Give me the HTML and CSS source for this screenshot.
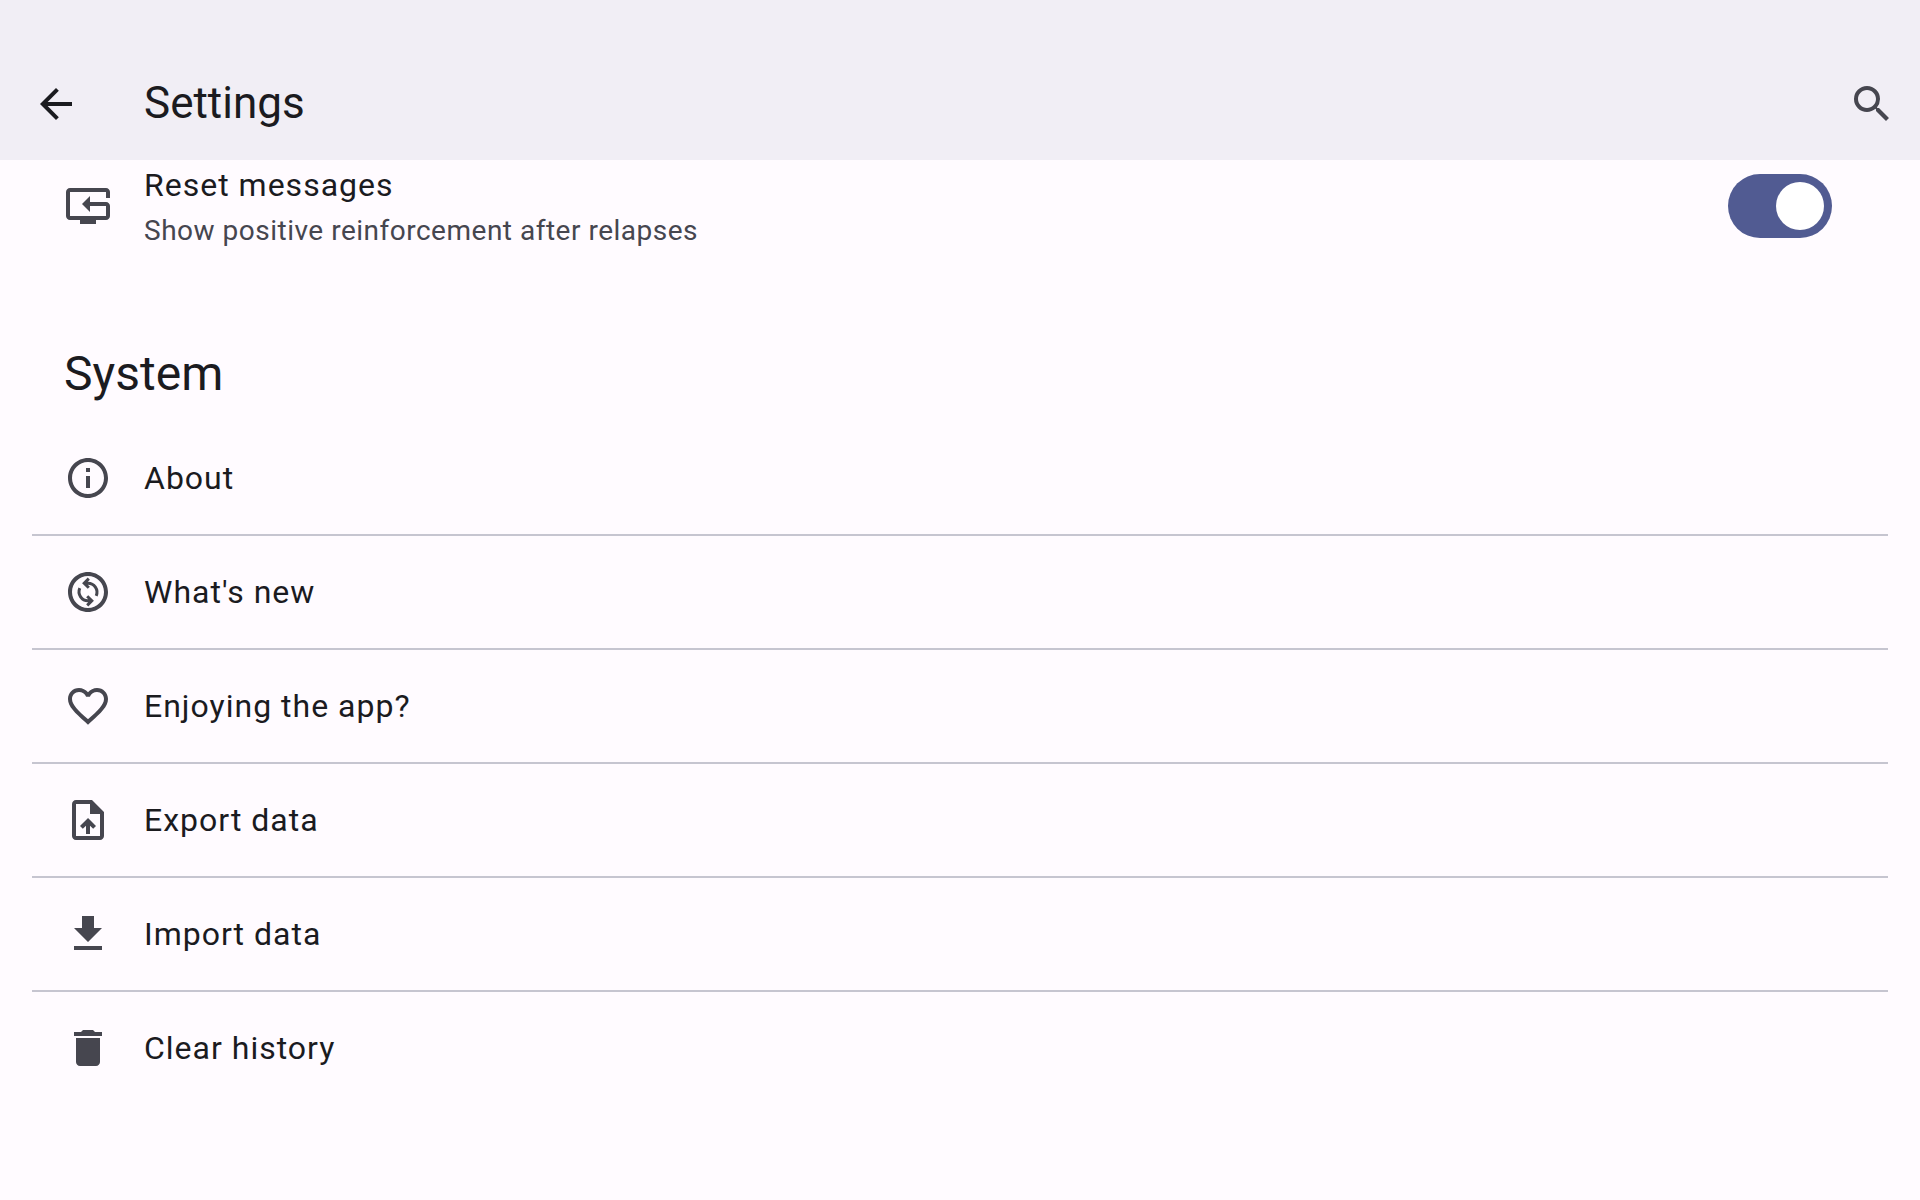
FILE: index.html
```html
<!DOCTYPE html>
<html lang="en">
<head>
<meta charset="utf-8">
<meta name="viewport" content="width=device-width, initial-scale=1">
<title>Settings</title>
<link rel="stylesheet" href="styles.css">
</head>
<body>
<header class="app-bar">
  <button class="icon-button icon-button-back" type="button" aria-label="Back">
    <svg class="icon" viewBox="0 0 24 24"><path d="M20 11H7.83l5.59-5.59L12 4l-8 8 8 8 1.41-1.41L7.83 13H20z"/></svg>
  </button>
  <h1 class="app-title">Settings</h1>
  <button class="icon-button icon-button-search" type="button" aria-label="Search">
    <svg class="icon" viewBox="0 0 24 24"><path d="M15.5 14h-.79l-.28-.27A6.47 6.47 0 0 0 16 9.5 6.5 6.5 0 1 0 9.5 16c1.61 0 3.09-.59 4.23-1.57l.27.28v.79l5 4.99L20.49 19l-4.99-5zm-6 0C7.01 14 5 11.99 5 9.5S7.01 5 9.5 5 14 7.01 14 9.5 11.99 14 9.5 14z"/></svg>
  </button>
</header>
<main class="settings">
  <label class="setting" for="reset-messages">
    <svg class="icon" viewBox="0 0 24 24"><path d="M23 8V5c0-1.1-.9-2-2-2H3c-1.1 0-2 .9-2 2v12c0 1.1.9 2 2 2h5v2h8v-2h5c1.1 0 2-.9 2-2v-5c0-1.1-.9-2-2-2h-8V7l-4 4 4 4v-3h8v5H3V5h18v3z"/></svg>
    <span class="setting-text">
      <span class="setting-title">Reset messages</span>
      <span class="setting-summary">Show positive reinforcement after relapses</span>
    </span>
    <input class="switch" type="checkbox" role="switch" id="reset-messages" checked>
  </label>
  <h2 class="section-title">System</h2>
  <ul class="list">
    <li class="list-item"><button class="row" type="button">
      <svg class="icon" viewBox="0 0 24 24"><path d="M11 7h2v2h-2zm0 4h2v6h-2zm1-9C6.48 2 2 6.48 2 12s4.48 10 10 10 10-4.48 10-10S17.52 2 12 2zm0 18c-4.41 0-8-3.59-8-8s3.59-8 8-8 8 3.59 8 8-3.59 8-8 8z"/></svg>
      About</button></li>
    <li class="list-item"><button class="row" type="button">
      <svg class="icon" viewBox="0 0 24 24"><path d="M12 2C6.48 2 2 6.48 2 12s4.48 10 10 10 10-4.48 10-10S17.52 2 12 2zm0 18c-4.41 0-8-3.59-8-8s3.59-8 8-8 8 3.59 8 8-3.59 8-8 8z"/><path class="icon-line" d="M12.4 5.3 10.1 7.6l2.3 2.3M10.1 7.6h1.7a4.5 4.5 0 0 1 4.3 6.3M11.6 18.7l2.3-2.3-2.3-2.3M13.9 16.4h-1.7a4.5 4.5 0 0 1-4.3-6.3"/></svg>
      What's new</button></li>
    <li class="list-item"><button class="row" type="button">
      <svg class="icon" viewBox="0 0 24 24"><path d="M16.5 3c-1.74 0-3.41.81-4.5 2.09C10.91 3.81 9.24 3 7.5 3 4.42 3 2 5.42 2 8.5c0 3.78 3.4 6.86 8.55 11.54L12 21.35l1.45-1.32C18.6 15.36 22 12.28 22 8.5 22 5.42 19.58 3 16.5 3zm-4.4 15.55l-.1.1-.1-.1C7.14 14.24 4 11.39 4 8.5 4 6.5 5.5 5 7.5 5c1.54 0 3.04.99 3.57 2.36h1.87C13.46 5.99 14.96 5 16.5 5c2 0 3.5 1.5 3.5 3.5 0 2.89-3.14 5.74-7.9 10.05z"/></svg>
      Enjoying the app?</button></li>
    <li class="list-item"><button class="row" type="button">
      <svg class="icon" viewBox="0 0 24 24"><path d="M14 2H6c-1.1 0-1.99.9-1.99 2L4 20c0 1.1.89 2 1.99 2H18c1.1 0 2-.9 2-2V8l-6-6zm4 18H6V4h7v5h5v11zM8 15.01l1.41 1.41L11 14.84V19h2v-4.16l1.59 1.59L16 15.01 12.01 11z"/></svg>
      Export data</button></li>
    <li class="list-item"><button class="row" type="button">
      <svg class="icon" viewBox="0 0 24 24"><path d="M19 9h-4V3H9v6H5l7 7zM5 18v2h14v-2z"/></svg>
      Import data</button></li>
    <li class="list-item"><button class="row" type="button">
      <svg class="icon" viewBox="0 0 24 24"><path d="M6 19c0 1.1.9 2 2 2h8c1.1 0 2-.9 2-2V7H6zM19 4h-3.5l-1-1h-5l-1 1H5v2h14z"/></svg>
      Clear history</button></li>
  </ul>
</main>
</body>
</html>
```
FILE: styles.css
```css
* {
  box-sizing: border-box;
}

body {
  margin: 0;
  background: #fffbff;
  color: #1b1b1f;
  font-family: Roboto, "Liberation Sans", sans-serif;
}

button {
  padding: 0;
  border: 0;
  background: none;
  font: inherit;
  color: inherit;
  cursor: pointer;
}

.icon {
  display: block;
  flex: none;
  width: 48px;
  height: 48px;
  fill: #46464f;
}

.icon-line {
  fill: none;
  stroke: #46464f;
  stroke-width: 1.5;
}

.app-bar {
  display: flex;
  align-items: center;
  gap: 64px;
  padding: 48px 24px 0 32px;
  height: 160px;
  background: #f1eef5;
}

.icon-button-back .icon {
  fill: #1b1b1f;
}

.app-title {
  flex: 1;
  margin: 0;
  padding-bottom: 2px;
  font-size: 44px;
  line-height: 56px;
  font-weight: 400;
}

.settings {
  padding: 0 32px 96px;
}

.setting {
  display: flex;
  align-items: center;
  gap: 32px;
  min-height: 92px;
  padding: 0 56px 0 32px;
}

.setting-text {
  display: flex;
  flex: 1;
  flex-direction: column;
  gap: 2px;
}

.setting-title,
.row {
  font-size: 32px;
  line-height: 48px;
  letter-spacing: 1px;
}

.setting-summary {
  color: #46464f;
  font-size: 28px;
  line-height: 40px;
  letter-spacing: 0.018em;
}

.switch {
  appearance: none;
  display: flex;
  align-items: center;
  justify-content: flex-end;
  flex: none;
  width: 104px;
  height: 64px;
  margin: 0;
  padding: 8px;
  border-radius: 32px;
  background: #c6c5d0;
  cursor: pointer;
}

.switch::before {
  content: "";
  width: 48px;
  height: 48px;
  border-radius: 50%;
  background: #fff;
}

.switch:not(:checked) {
  justify-content: flex-start;
}

.switch:checked {
  background: #515b92;
}

.section-title {
  margin: 0;
  padding: 90px 32px 16px;
  font-size: 48px;
  line-height: 64px;
  font-weight: 400;
}

.list {
  margin: 0;
  padding: 0;
  list-style: none;
}

.list-item + .list-item {
  border-top: 2px solid #c6c5d0;
}

.row {
  display: flex;
  align-items: center;
  gap: 32px;
  width: 100%;
  padding: 32px;
  text-align: left;
}
```
